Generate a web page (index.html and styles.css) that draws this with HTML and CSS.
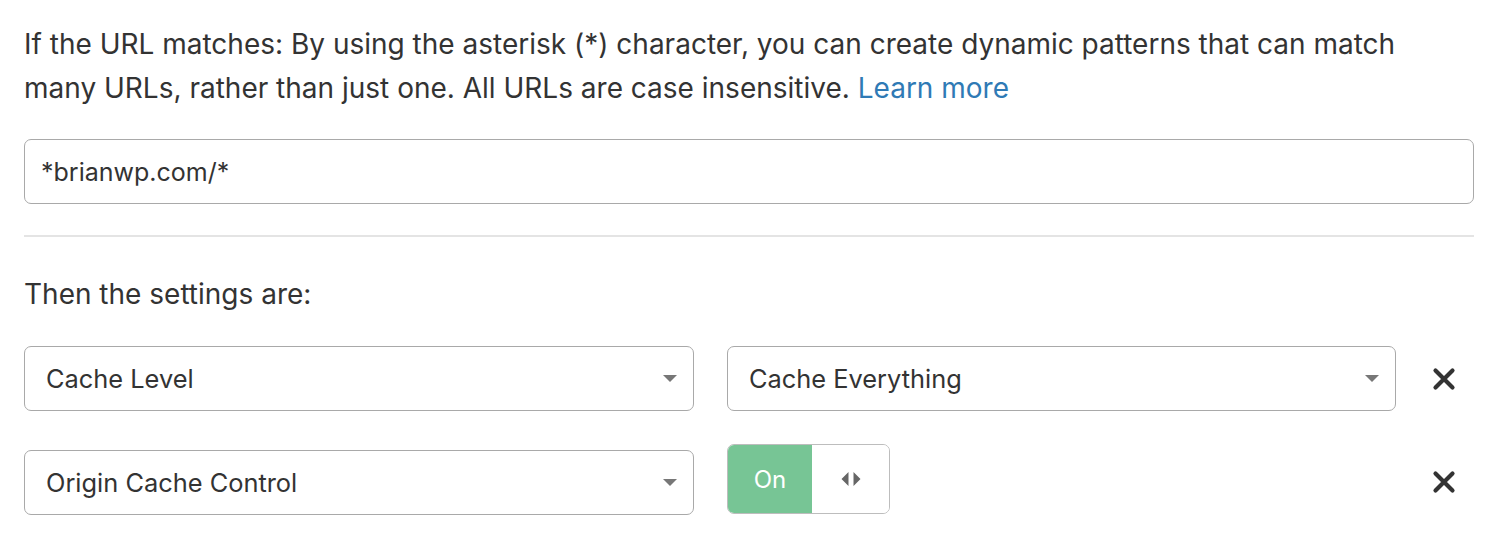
FILE: index.html
```html
<!DOCTYPE html>
<html lang="en">
<head>
<meta charset="utf-8">
<title>Page Rule</title>
<link rel="stylesheet" href="styles.css">
</head>
<body>
<div class="page">
  <p class="intro">If the URL matches: By using the asterisk (*) character, you can create dynamic patterns that can match many URLs, rather than just one. All URLs are case insensitive. <a class="link" href="#">Learn more</a></p>
  <div class="url-input">*brianwp.com/*</div>
  <hr class="divider">
  <p class="label">Then the settings are:</p>
  <div class="setting-row">
    <div class="select"><span>Cache Level</span><span class="caret"></span></div>
    <div class="select"><span>Cache Everything</span><span class="caret"></span></div>
    <div class="remove"><svg viewBox="0 0 24 24" width="24" height="24"><path d="M3.5 3.5 L20.5 20.5 M20.5 3.5 L3.5 20.5" stroke="#333" stroke-width="4.2" stroke-linecap="round"/></svg></div>
  </div>
  <div class="setting-row toggle-row">
    <div class="select"><span>Origin Cache Control</span><span class="caret"></span></div>
    <div class="value-cell">
      <div class="toggle">
        <div class="toggle-on">On</div>
        <div class="toggle-knob"><svg viewBox="0 0 22 16" width="22" height="16"><path d="M8.5 1 L8.5 15 L1.5 8 Z M13.5 1 L13.5 15 L20.5 8 Z" fill="#666"/></svg></div>
      </div>
    </div>
    <div class="remove"><svg viewBox="0 0 24 24" width="24" height="24"><path d="M3.5 3.5 L20.5 20.5 M20.5 3.5 L3.5 20.5" stroke="#333" stroke-width="4.2" stroke-linecap="round"/></svg></div>
  </div>
</div>
</body>
</html>
```

FILE: styles.css
```css
html, body {
  margin: 0;
  padding: 0;
  background: #fff;
}
body {
  font-family: Inter, "Liberation Sans", Arial, sans-serif;
  color: #333;
}
.page {
  width: 1450px;
  padding: 22px 26px 0 24px;
}
.intro {
  margin: 0;
  font-size: 28px;
  line-height: 44px;
}
.link {
  color: #2f7ab5;
  text-decoration: none;
}
.url-input {
  margin-top: 29px;
  height: 63px;
  border: 1px solid #a9a9a9;
  border-radius: 7px;
  padding: 0 16px;
  display: flex;
  align-items: center;
  font-size: 25px;
}
.divider {
  margin: 31px 0 0;
  border: 0;
  border-top: 2px solid #e4e4e4;
  height: 0;
}
.label {
  margin: 36px 0 0;
  font-size: 28px;
  line-height: 43px;
}
.setting-row {
  display: grid;
  grid-template-columns: 670px 669px 1fr;
  column-gap: 33px;
  align-items: center;
  margin-top: 30px;
}
.setting-row.toggle-row {
  margin-top: 33px;
}
.select {
  height: 63px;
  border: 1px solid #a9a9a9;
  border-radius: 7px;
  padding: 0 16px 0 21px;
  display: flex;
  align-items: center;
  justify-content: space-between;
  font-size: 25.4px;
}
.caret {
  width: 0;
  height: 0;
  border-left: 7px solid transparent;
  border-right: 7px solid transparent;
  border-top: 7px solid #777;
}
.remove {
  display: flex;
  justify-content: flex-start;
  padding-left: 3px;
}
.value-cell {
  display: flex;
}
.toggle {
  display: flex;
  width: 163px;
  height: 70px;
  margin-bottom: 6px;
  border: 1px solid #bdbdbd;
  border-radius: 7px;
  overflow: hidden;
  box-sizing: border-box;
}
.toggle-on {
  width: 84px;
  background: #77c595;
  color: #fff;
  font-size: 24px;
  display: flex;
  align-items: center;
  justify-content: center;
}
.toggle-knob {
  flex: 1;
  display: flex;
  align-items: center;
  justify-content: center;
  background: #fff;
}
```
